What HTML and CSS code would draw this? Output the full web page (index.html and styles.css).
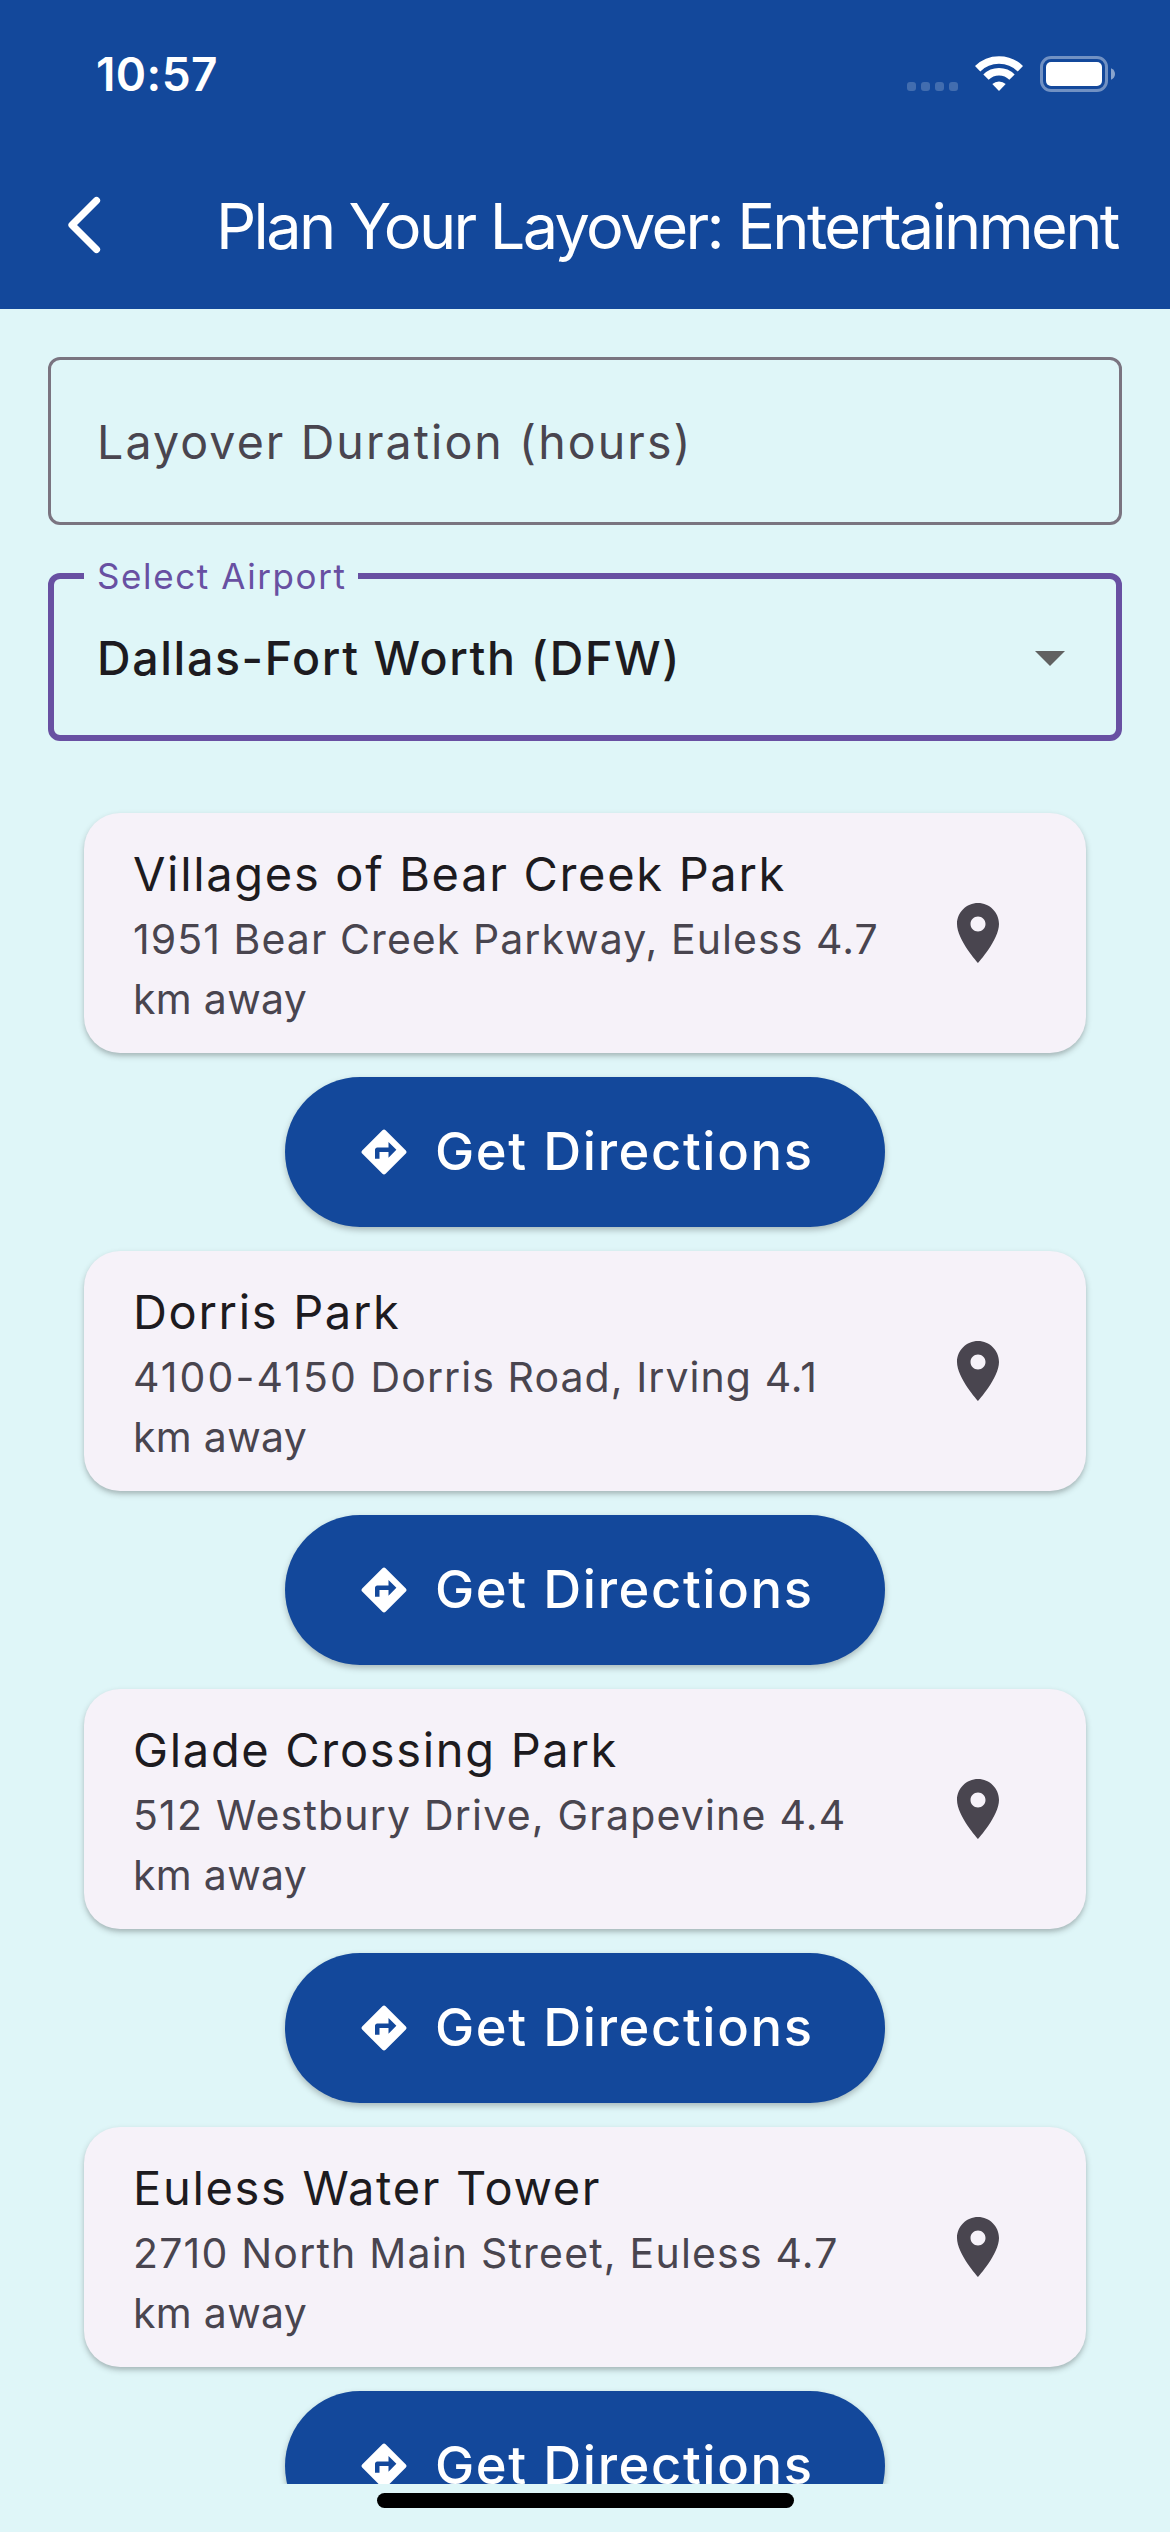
FILE: index.html
```html
<!DOCTYPE html>
<html lang="en">
<head>
<meta charset="utf-8">
<title>Plan Your Layover: Entertainment</title>
<link rel="stylesheet" href="styles.css">
</head>
<body>
<svg width="0" height="0" class="defs" aria-hidden="true">
  <symbol id="pin" viewBox="0 0 24 24"><path d="M12 2C8.130 2 5 5.130 5 9c0 5.250 7 13 7 13s7-7.750 7-13c0-3.870-3.130-7-7-7zm0 9.500c-1.380 0-2.500-1.120-2.500-2.500s1.120-2.500 2.500-2.500 2.500 1.120 2.500 2.500-1.120 2.500-2.500 2.500z"/></symbol>
  <symbol id="directions" viewBox="0 0 24 24"><path d="M21.710 11.290l-9-9c-.390-.390-1.020-.390-1.410 0l-9 9c-.390.390-.390 1.020 0 1.410l9 9c.390.390 1.020.390 1.410 0l9-9c.390-.380.390-1.010 0-1.410zM14 14.500V12h-4v3H8v-4c0-.550.450-1 1-1h5V7.500l3.500 3.500-3.500 3.500z"/></symbol>
</svg>
<div class="screen">
  <header class="header">
    <div class="status">
      <span class="time">10:57</span>
      <div class="status-icons">
        <span class="dots"><i></i><i></i><i></i><i></i></span>
        <svg class="wifi" viewBox="0 0 48 36">
          <g fill="none" stroke="#fff" stroke-width="7.600">
            <path d="M2.600 13.700A30.500 30.500 0 0 1 45.400 13.700"/>
            <path d="M11 22.100A18.500 18.500 0 0 1 37 22.100"/>
          </g>
          <path d="M24 36L17.300 29.100A9.800 9.800 0 0 1 30.700 29.100Z" fill="#fff"/>
        </svg>
        <svg class="battery" viewBox="0 0 75 36">
          <rect x="1.500" y="1.500" width="65" height="33" rx="9.500" fill="none" stroke="#fff" stroke-width="3" opacity=".4"/>
          <rect x="6" y="6" width="56" height="24" rx="5" fill="#fff"/>
          <path d="M71 12.200c2.600 1 4 3.300 4 5.800s-1.400 4.800-4 5.800z" fill="#fff" opacity=".5"/>
        </svg>
      </div>
    </div>
    <div class="appbar">
      <svg class="back" viewBox="0 0 34 58"><path d="M29.500 4.500L5 29L29.500 53.500" fill="none" stroke="#fff" stroke-width="7.200" stroke-linecap="round" stroke-linejoin="round"/></svg>
      <h1 class="title">Plan Your Layover: Entertainment</h1>
    </div>
  </header>
  <main class="content">
    <div class="field"><span class="placeholder">Layover Duration (hours)</span></div>
    <div class="field field-active">
      <span class="field-label">Select Airport</span>
      <span class="value">Dallas-Fort Worth (DFW)</span>
      <svg class="caret" viewBox="0 0 30 15"><path d="M0 0h30L15 15z" fill="#616161"/></svg>
    </div>
    <div class="results">
      <article class="card">
        <div class="info"><h2 class="name">Villages of Bear Creek Park</h2><p class="address">1951 Bear Creek Parkway, Euless 4.7</p><p class="address distance">km away</p></div>
        <svg class="pin"><use href="#pin"/></svg>
      </article>
      <button class="directions"><svg class="dir-icon"><use href="#directions"/></svg><span>Get Directions</span></button>
      <article class="card">
        <div class="info"><h2 class="name">Dorris Park</h2><p class="address"><span class="range">4100-4150</span> Dorris Road, Irving 4.1</p><p class="address distance">km away</p></div>
        <svg class="pin"><use href="#pin"/></svg>
      </article>
      <button class="directions"><svg class="dir-icon"><use href="#directions"/></svg><span>Get Directions</span></button>
      <article class="card">
        <div class="info"><h2 class="name">Glade Crossing Park</h2><p class="address wide">512 Westbury Drive, Grapevine 4.4</p><p class="address distance">km away</p></div>
        <svg class="pin"><use href="#pin"/></svg>
      </article>
      <button class="directions"><svg class="dir-icon"><use href="#directions"/></svg><span>Get Directions</span></button>
      <article class="card">
        <div class="info"><h2 class="name">Euless Water Tower</h2><p class="address wide">2710 North Main Street, Euless 4.7</p><p class="address distance">km away</p></div>
        <svg class="pin"><use href="#pin"/></svg>
      </article>
      <button class="directions"><svg class="dir-icon"><use href="#directions"/></svg><span>Get Directions</span></button>
    </div>
  </main>
  <footer class="home"><span class="home-bar"></span></footer>
</div>
</body>
</html>
```
FILE: styles.css
```css
* { box-sizing: border-box; }
body { margin: 0; font-family: Inter, "Liberation Sans", sans-serif; background: #dff6f8; }
h1, h2, p { margin: 0; font-weight: 400; }
svg { display: block; flex: none; }
.defs { position: absolute; }

.screen { width: 1170px; height: 2532px; display: flex; flex-direction: column; overflow: hidden; }

.header { flex: none; height: 309px; background: #13489b; color: #fff; }
.status { height: 141px; padding: 46px 55px 0 96px; display: flex; justify-content: space-between; align-items: flex-start; }
.time { font-size: 46px; line-height: 56px; font-weight: 600; letter-spacing: 0.4px; }
.status-icons { display: flex; align-items: flex-end; height: 46px; }
.dots { display: flex; gap: 5px; margin: 0 17px 1px 0; }
.dots i { width: 9px; height: 9px; border-radius: 3px; background: #426daf; }
.wifi { width: 48px; height: 36px; margin: 0 17px 1px 0; }
.battery { width: 75px; height: 36px; }

.appbar { height: 168px; padding-left: 67px; display: flex; align-items: center; }
.back { width: 34px; height: 58px; margin-right: 115px; }
.title { padding-top: 2px; font-size: 63px; line-height: 80px; letter-spacing: -2.65px; white-space: nowrap; }

.content { flex: 1; min-height: 0; overflow: hidden; padding: 48px 48px 0; display: flex; flex-direction: column; }
.field { position: relative; flex: none; height: 168px; border: 3px solid #7a7480; border-radius: 12px; padding: 2px 54px 0 46px; display: flex; align-items: center; justify-content: space-between; font-size: 46.5px; white-space: nowrap; }
.placeholder { color: #49454f; letter-spacing: 2.1px; }
.field-active { margin-top: 48px; border: 6px solid #6850a2; padding: 2px 51px 0 43px; }
.field-label { position: absolute; left: 30px; top: -25px; padding: 0 11px 0 13px; background: #dff6f8; color: #6850a2; font-size: 35px; line-height: 44px; letter-spacing: 1.6px; }
.value { color: #1d1b20; font-weight: 500; letter-spacing: 1.62px; }
.caret { width: 30px; height: 15px; }

.results { margin-top: 72px; padding: 0 36px; display: flex; flex-direction: column; align-items: center; gap: 24px; }
.card { flex: none; width: 100%; height: 240px; padding: 26px 72px 24px 49px; border-radius: 36px; background: #f6f2f9; display: flex; align-items: center; justify-content: space-between; box-shadow: 0 3px 6px rgba(0, 0, 0, .22), 0 3px 3px rgba(0, 0, 0, .05); }
.name { font-size: 47px; line-height: 70px; letter-spacing: 1.68px; color: #1d1b20; white-space: nowrap; }
.address { font-size: 41px; line-height: 60px; letter-spacing: 1.07px; color: #49454f; white-space: nowrap; }
.range { letter-spacing: 2.1px; }
.wide { letter-spacing: 1.2px; }
.distance { letter-spacing: .3px; }
.pin { width: 72px; height: 72px; margin-bottom: 3px; fill: #49454f; }
.directions { flex: none; width: 600px; height: 150px; padding: 0 0 0 72px; border: 0; border-radius: 75px; background: #13489b; color: #fff; font: 500 52.5px/64px Inter, "Liberation Sans", sans-serif; letter-spacing: 1.6px; white-space: nowrap; display: flex; align-items: center; gap: 24px; box-shadow: 0 3px 6px rgba(0, 0, 0, .25); }
.directions span { padding-bottom: 3px; }
.dir-icon { width: 54px; height: 54px; fill: #fff; }

.home { flex: none; height: 48px; padding-top: 9px; display: flex; justify-content: center; align-items: flex-start; }
.home-bar { width: 417px; height: 15px; border-radius: 8px; background: #000; }
```
